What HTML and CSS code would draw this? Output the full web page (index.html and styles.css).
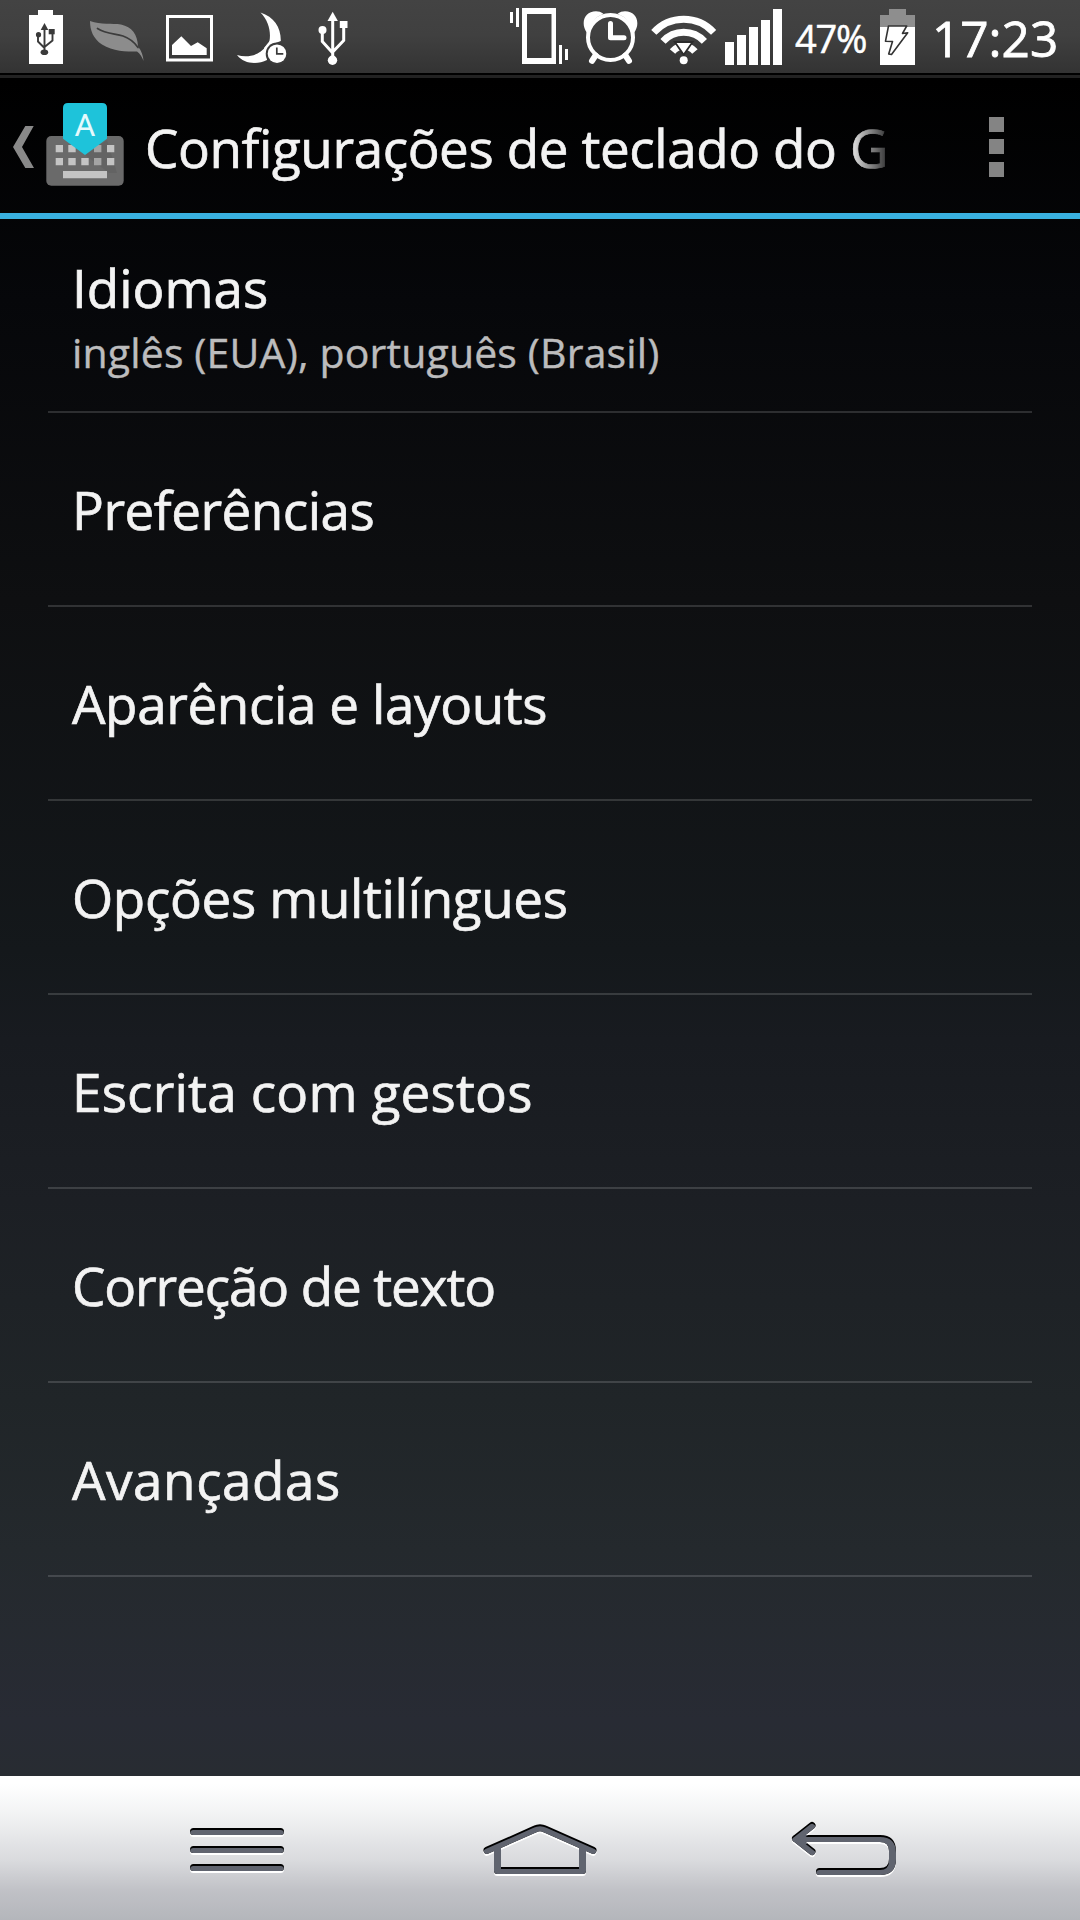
FILE: index.html
```html
<!DOCTYPE html>
<html lang="pt-BR">
<head>
    <meta charset="UTF-8">
    <meta name="viewport" content="width=device-width, initial-scale=1.0">
    <title>Configurações de teclado</title>
    <link rel="stylesheet" href="styles.css">
</head>
<body>
    <div class="status-bar">
        <!-- notifications -->
        <svg class="battery-usb" width="34" height="73" viewBox="29 0 34 73">
            <path fill="#fff" d="M38 10h15v5h10v49H29V15h9z"/>
            <g fill="#3a3a3a">
                <path d="M44.5 23l3.8 7h-7.6z"/>
                <circle cx="38.5" cy="34.7" r="2.6"/>
                <path d="M48.7 29h6v5.3h-6z"/>
                <ellipse cx="44.4" cy="52.3" rx="3.8" ry="2.8"/>
            </g>
            <path fill="none" stroke="#3a3a3a" stroke-width="1.9" d="M44.5 28v24M38 35v6.5l6 6M52.5 33v7.5l-8 6.5"/>
        </svg>
        <svg class="leaf" width="54" height="73" viewBox="90 0 54 73">
            <path fill="#8c8c8c" d="M90 21C101 25 112 23 121 24.500C132 27 137.500 34 138 46.500C141.500 50.500 143.300 56 143.500 61C142 57 140 53.500 137 51.500C126 51.500 113 51.500 102 44.500C93 38.500 90 30 90 21z"/>
            <path fill="none" stroke="#3c3c3c" stroke-width="1.700" stroke-linecap="round" d="M97.500 28.500C106 34 115 33.500 123 36C130 38.500 135 43 138 47.500"/>
        </svg>
        <svg class="picture" width="47" height="73" viewBox="166 0 47 73">
            <path fill="none" stroke="#fff" stroke-width="3" d="M167.500 16.500h44v43.500h-44z"/>
            <path fill="#fff" d="M172 45l9.300-8.700L191 46l6.700-3.700 9 6V55H172z"/>
        </svg>
        <svg class="moon" width="50" height="73" viewBox="237 0 50 73">
            <path fill="#fff" d="M260.500 12.500C274 17 281 27 280.800 41L268 46C272 36 270 22 260.500 12.500zM237 55C248 58.500 260 55 266 46L267 60C258 64.500 244 64.500 237 55z"/>
            <path fill="#fff" d="M264 48L272 38L276 46L268 56z"/>
            <circle cx="277" cy="53.700" r="11.300" fill="#3a3a3a"/>
            <circle cx="277" cy="53.700" r="9.300" fill="#fff"/>
            <path fill="none" stroke="#3a3a3a" stroke-width="1.700" d="M276.800 47.500v6.300h6.500"/>
        </svg>
        <svg class="usb" width="30" height="73" viewBox="317.500 0 30 73">
            <g fill="#fff">
                <path d="M332.200 11.700l5.200 9.300H327z"/>
                <circle cx="322" cy="30" r="4"/>
                <path d="M339.300 21h7.700v7h-7.700z"/>
                <circle cx="332" cy="60.300" r="4.700"/>
            </g>
            <path fill="none" stroke="#fff" stroke-width="3" d="M332.200 19v40M321.800 30v11.500l10 11M343.200 27v13.500l-10.500 11"/>
        </svg>

        <!-- system state -->
        <svg class="vibrate" width="58" height="73" viewBox="510 0 58 73">
            <path fill="#fff" fill-rule="evenodd" d="M522 8h34v56h-34zM527 14v44h24.500V14z"/>
            <path fill="#fff" d="M510 12h3v11h-3zM516 8h3v19h-3zM559 45h3v19h-3zM565 49h3v11h-3z"/>
        </svg>
        <svg class="alarm" width="56" height="73" viewBox="583 0 56 73">
            <path fill="#fff" d="M587 33C580 23 584.500 11.500 596 11.300Q600 11.300 603.500 13.700Q592 18 587 33zM634 33C641 23 636.500 11.500 625 11.300Q621 11.300 617.500 13.700Q629 18 634 33z"/>
            <circle cx="610.500" cy="37.500" r="22.500" fill="none" stroke="#fff" stroke-width="4"/>
            <path fill="none" stroke="#fff" stroke-width="5" stroke-linecap="round" stroke-linejoin="round" d="M610.500 23.500v14.300H624"/>
            <path stroke="#fff" stroke-width="6" stroke-linecap="round" d="M595.500 55.500l-3.500 5.300M625.500 55.500l3.500 5.300"/>
        </svg>
        <svg class="wifi" width="66" height="73" viewBox="651 0 66 73">
            <g fill="none" stroke="#fff" stroke-width="7">
                <path d="M653.800 32.300a40.700 40.700 0 0 1 59.800 0"/>
                <path d="M663 41.400a28 28 0 0 1 41.400 0"/>
                <path d="M672.500 51.500a14.500 14.500 0 0 1 22.400 0"/>
            </g>
            <path fill="#fff" stroke="#2c2c2c" stroke-width="1.800" d="M674.800 42h17.800l-8.900 12.800z"/>
            <circle cx="683.700" cy="60.300" r="4" fill="#fff"/>
        </svg>
        <svg class="signal" width="57" height="73" viewBox="725 0 57 73">
            <path fill="#fff" d="M725 42h9v23h-9zM737 35h9v30h-9zM749 27h9v38h-9zM761 20h9v45h-9zM773 9h9v56h-9z"/>
        </svg>
        <span class="percent">47%</span>
        <svg class="charging" width="35" height="73" viewBox="880 0 35 73">
            <path fill="#8e8e8e" d="M889 9h17v6h9v12h-35V15h9z"/>
            <path fill="#fff" d="M880 27h35v38h-35z"/>
            <path fill="#fff" stroke="#333" stroke-width="1.600" stroke-linejoin="round" d="M888.500 26h18.200l-4.200 7.500 5.200-.8L891.500 54.500l-2.800-.5 3.800-12.500-7-.3z"/>
        </svg>
        <span class="clock">17:23</span>
    </div>

    <header>
        <svg class="back-arrow" width="21" height="133" viewBox="12.700 80 21 133">
            <path fill="#898989" d="M25 126h8.400l-11.700 21 12 21H25l-12.300-21z"/>
        </svg>
        <svg class="keyboard" width="78" height="133" viewBox="46 80 78 133">
            <rect x="46.300" y="136" width="77.400" height="49.700" rx="5" fill="#6a6a6a"/>
            <path fill="#5b5b5b" d="M85 155l22-15 10 33-8 0z" opacity=".4"/>
            <path fill="#c4c4c4" d="M55.700 145H63v7.300h-7.300zM68.300 145h7.400v7.300h-7.400zM107 145h7.300v7.300H107zM55.700 158H63v7.300h-7.300zM68.300 158h7.400v7.300h-7.400zM81.300 158h7.400v7.300h-7.400zM107 158h7.300v7.300H107zM63 171h44v7.300H63z"/>
            <path fill="#a4a4a4" d="M94 145h7.400v7.300H94zM94 158h7.400v7.300H94z"/>
            <path fill="#1ec3da" d="M68 103h34q5 0 5 5v30.700L85 155l-22-16.300V108q0-5 5-5z"/>
            <text class="key-letter" x="85" y="136" text-anchor="middle">A</text>
        </svg>
        <h1>Configurações de teclado do G</h1>
        <div class="menu-dots">
            <span></span>
            <span></span>
            <span></span>
        </div>
    </header>

    <main>
        <ul>
            <li>
                <span class="name">Idiomas</span>
                <span class="summary">inglês (EUA), português (Brasil)</span>
            </li>
            <li><span class="name preferences">Preferências</span></li>
            <li><span class="name appearance">Aparência e layouts</span></li>
            <li><span class="name multilingual">Opções multilíngues</span></li>
            <li><span class="name gestures">Escrita com gestos</span></li>
            <li><span class="name correction">Correção de texto</span></li>
            <li><span class="name advanced">Avançadas</span></li>
        </ul>
    </main>

    <!-- each key is a white edge, a black edge and the grey face on top -->
    <nav>
        <svg class="nav-menu" width="94" height="144" viewBox="190 1776 94 144">
            <defs>
                <path id="lines" d="M193.500 1831.500h87M193.500 1849.500h87M193.500 1867.500h87"/>
                <mask id="linesMask" maskUnits="userSpaceOnUse" x="190" y="1776" width="94" height="144"><use href="#lines" stroke="#fff"/></mask>
            </defs>
            <use href="#lines" y="2" stroke="#fff"/>
            <use href="#lines" stroke="#000"/>
            <g mask="url(#linesMask)"><use href="#lines" y="2" stroke="#60646f"/></g>
        </svg>
        <svg class="nav-home" width="116" height="144" viewBox="482 1776 116 144">
            <defs>
                <g id="house">
                    <path d="M487 1850.300L535 1829Q540 1826.500 545 1829L593 1850.300"/>
                    <path stroke-linecap="butt" d="M497.500 1847v23.500h85V1847"/>
                </g>
                <mask id="houseMask" maskUnits="userSpaceOnUse" x="482" y="1776" width="116" height="144"><use href="#house" stroke="#fff"/></mask>
            </defs>
            <use href="#house" y="2" stroke="#fff"/>
            <use href="#house" stroke="#000"/>
            <g mask="url(#houseMask)"><use href="#house" y="2" stroke="#60646f"/></g>
        </svg>
        <svg class="nav-back" width="108" height="144" viewBox="790 1776 108 144">
            <defs>
                <g id="back">
                    <path d="M812 1825.500L795.500 1838.500L812 1851.500"/>
                    <path d="M796 1838.500h84q12.500 0 12.500 12.500v8q0 12.500-12.500 12.500h-60.500"/>
                    <path stroke-width="3" d="M797 1838.500l7-4v8z"/>
                </g>
                <mask id="backMask" maskUnits="userSpaceOnUse" x="790" y="1776" width="108" height="144"><use href="#back" stroke="#fff"/></mask>
            </defs>
            <use href="#back" y="2" stroke="#fff"/>
            <use href="#back" stroke="#000"/>
            <g mask="url(#backMask)"><use href="#back" y="2" stroke="#60646f"/></g>
        </svg>
    </nav>
</body>
</html>
```
FILE: styles.css
```css
body {
    margin: 0;
    width: 1080px;
    height: 1920px;
    display: flex;
    flex-direction: column;
    overflow: hidden;
    font-family: "Open Sans", "Noto Sans", sans-serif;
    color: #f3f3f3;
    background: linear-gradient(#000 80px, #06070a 300px, #0e0f11 600px, #14181b 950px, #181b20 1040px, #1c1f24 1200px, #202528 1400px, #24292d 1550px, #282b34 1720px, #282c32 1776px);
}
svg {
    display: block;
    flex: none;
}

/* Status bar */
.status-bar {
    flex: none;
    box-sizing: border-box;
    height: 80px;
    padding-left: 29px;
    display: flex;
    background: linear-gradient(#434343, #404040 35px, #333 73px, #000 73px, #000 75px, #222 75px, #222 78px, #000 78px);
    color: #fff;
    white-space: nowrap;
}
.leaf {
    margin-left: 27px;
}
.picture {
    margin-left: 22px;
}
.moon {
    margin-left: 24px;
}
.usb {
    margin-left: 30.5px;
}
.vibrate {
    margin-left: 162.5px;
}
.alarm {
    margin-left: 15px;
}
.wifi {
    margin-left: 12px;
}
.signal {
    margin-left: 8px;
}
.percent {
    width: 85px;
    margin-left: 13px;
    font-size: 38px;
    line-height: 76px;
    letter-spacing: -1.2px;
    -webkit-text-stroke: 0.5px;
}
.clock {
    margin-left: 17px;
    font-size: 49.5px;
    line-height: 76px;
    -webkit-text-stroke: 0.8px;
}

/* Title bar */
header {
    flex: none;
    height: 133px;
    padding-left: 12.7px;
    display: flex;
    align-items: center;
    border-bottom: 6px solid #39b1e0;
}
.keyboard {
    margin-left: 12.3px;
}
.key-letter {
    font-family: Roboto, sans-serif;
    font-size: 32px;
    fill: #e6fafd;
}
h1 {
    width: 745px;
    margin: 0 0 0 21px;
    padding-top: 2px;
    white-space: nowrap;
    font-size: 53px;
    font-weight: 400;
    line-height: 73px;
    letter-spacing: -0.41px;
    -webkit-text-stroke: 0.7px;
    -webkit-mask-image: linear-gradient(to right, #000 704px, rgba(0, 0, 0, 0.25) 740px);
    mask-image: linear-gradient(to right, #000 704px, rgba(0, 0, 0, 0.25) 740px);
}
.menu-dots {
    margin-left: 99px;
    display: flex;
    flex-direction: column;
    gap: 7.5px;
}
.menu-dots span {
    width: 15px;
    height: 15px;
    background-color: #848484;
}

/* Settings list */
main {
    flex: 1;
    padding: 0 48px;
}
ul {
    list-style-type: none;
    margin: 0;
    padding: 0;
}
li {
    box-sizing: border-box;
    height: 194px;
    padding-left: 24px;
    padding-top: 1px;
    display: flex;
    flex-direction: column;
    justify-content: center;
    border-bottom: 2px solid rgba(255, 255, 255, 0.15);
    white-space: nowrap;
}
.name {
    font-size: 53px;
    line-height: 72px;
    -webkit-text-stroke: 0.7px;
}
.preferences {
    letter-spacing: -0.5px;
}
.appearance {
    letter-spacing: -0.4px;
}
.multilingual {
    letter-spacing: -0.36px;
}
.gestures {
    letter-spacing: 0.19px;
}
.correction {
    letter-spacing: -1.12px;
}
.advanced {
    letter-spacing: 0.55px;
}
.summary {
    font-size: 41px;
    line-height: 56px;
    letter-spacing: 0.15px;
    color: #bcbcbd;
    -webkit-text-stroke: 0.4px;
}

/* Navigation keys */
nav {
    flex: none;
    height: 144px;
    padding-left: 190px;
    display: flex;
    background: linear-gradient(#fff 8px, #f1f2f3 40px, #d9dadd 85px, #c0c1c6 115px, #b4b6bb);
}
nav svg {
    fill: none;
    stroke-width: 7px;
    stroke-linecap: round;
    stroke-linejoin: round;
}
.nav-home {
    margin-left: 198px;
}
.nav-back {
    margin-left: 192px;
}
```
